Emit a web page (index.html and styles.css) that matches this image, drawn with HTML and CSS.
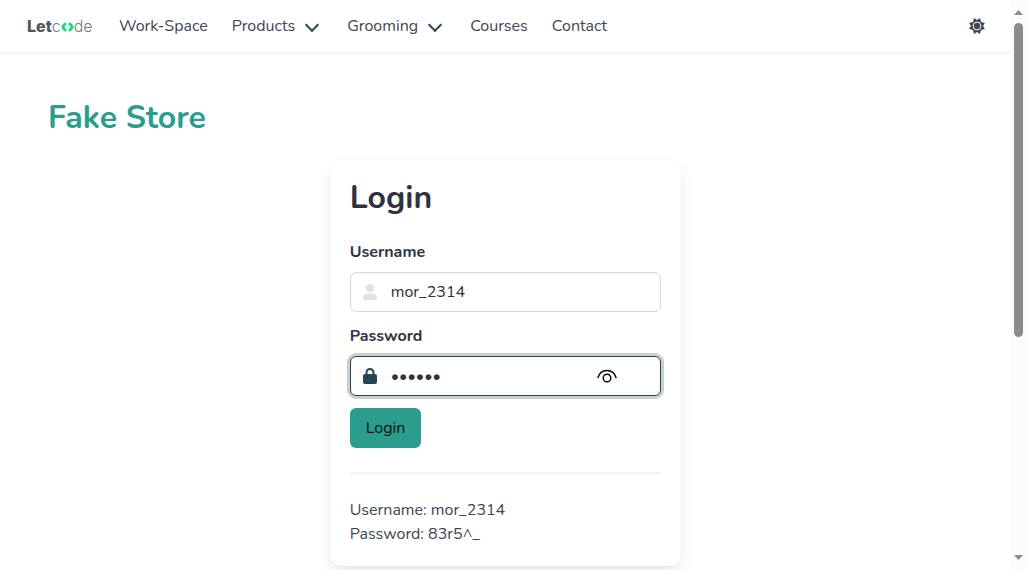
FILE: index.html
```
<!DOCTYPE html>
<html lang="en">
<head>
<meta charset="utf-8">
<meta name="viewport" content="width=device-width, initial-scale=1">
<title>Fake Store - LetCode</title>
<link rel="stylesheet" href="styles.css">
</head>
<body>
<div class="page">
  <header class="navbar">
    <a class="logo" href="#" aria-label="Letcode home"><b>Let</b><span>c</span><svg class="logo-mark" viewBox="0 0 13 10" aria-hidden="true"><path d="M5.300 1.500A4 3.600 0 0 0 2.300 5 4 3.600 0 0 0 5.300 8.500M7.700 1.500A4 3.600 0 0 1 10.700 5 4 3.600 0 0 1 7.700 8.500" fill="none" stroke="#0bdc82" stroke-width="2.600"/><path d="M0 5l2.500-2.500v5zM13 5l-2.500-2.500v5z" fill="#0bdc82"/></svg><span>de</span></a>
    <nav class="menu" aria-label="Main">
      <a href="#">Work-Space</a>
      <a class="has-arrow" href="#">Products</a>
      <a class="has-arrow" href="#">Grooming</a>
      <a href="#">Courses</a>
      <a href="#">Contact</a>
    </nav>
    <button class="theme" type="button" aria-label="Toggle theme">
      <svg viewBox="0 0 16 16" aria-hidden="true"><path fill="#404654" d="M8 2L11 .1l1 3.900 3.900 1L14 8l1.900 3-3.900 1-1 3.900L8 14l-3 1.900L4 12l-3.900-1L2 8 .1 5 4 4 5 .1z"/><circle cx="8" cy="8" r="3.900" fill="#404654" stroke="#fff" stroke-width="1"/></svg>
    </button>
  </header>
  <main class="section">
    <h1 class="title brand">Fake Store</h1>
    <div class="columns">
      <div class="column">
        <section class="box">
          <h2 class="title">Login</h2>
          <form class="form">
            <div class="field">
              <label for="username">Username</label>
              <div class="control">
                <input id="username" type="text" value="mor_2314">
                <svg class="icon" viewBox="0 0 14 16" aria-hidden="true"><circle cx="7" cy="4" r="4"/><path d="M0 16v-1.500a5 5 0 0 1 5-5h4a5 5 0 0 1 5 5V16z"/></svg>
              </div>
            </div>
            <div class="field">
              <label for="password">Password</label>
              <div class="control active">
                <input id="password" type="password" value="83r5^_">
                <svg class="icon" viewBox="0 0 14 16" aria-hidden="true"><path fill-rule="evenodd" d="M2.500 6V4.500a4.500 4.500 0 0 1 9 0V6H12a2 2 0 0 1 2 2v6a2 2 0 0 1-2 2H2a2 2 0 0 1-2-2V8a2 2 0 0 1 2-2zM4.500 6h5V4.500a2.500 2.500 0 0 0-5 0z"/></svg>
                <button class="reveal" type="button" aria-label="Show password"><svg viewBox="0 0 20 14" aria-hidden="true"><path d="M.8 9C2.200 4 5.600 1.500 10 1.500S17.800 4 19.200 9"/><circle cx="10" cy="9" r="3.800"/></svg></button>
              </div>
            </div>
            <button class="submit" type="button">Login</button>
          </form>
          <hr>
          <p>Username: mor_2314<br>Password: 83r5^_</p>
        </section>
      </div>
    </div>
  </main>
</div>
<div class="scrollbar" aria-hidden="true">
  <svg viewBox="0 0 9 5"><path d="M0 5L4.500 0 9 5z"/></svg>
  <div class="track"><div class="thumb"></div></div>
  <svg viewBox="0 0 9 5"><path d="M0 0L4.500 5 9 0z"/></svg>
</div>
</body>
</html>
```
FILE: styles.css
```
* { box-sizing: border-box; }
html { height: 100%; }
body {
  margin: 0;
  height: 100%;
  display: flex;
  overflow: hidden;
  background: #fff;
  color: #404654;
  font: 400 16px/24px Nunito, Lato, "Open Sans", sans-serif;
}
.page { flex: 1; min-width: 0; overflow: hidden; }
.navbar {
  display: flex;
  align-items: center;
  min-height: 52px;
  padding: 0 25px 0 27px;
  box-shadow: 0 2px 0 #f3f4f6;
}
.logo {
  display: flex;
  align-items: center;
  width: 68px;
  margin-right: 24px;
  color: #777;
  font: 300 16px/24px Inter, sans-serif;
  text-decoration: none;
}
.logo b { color: #555; font-weight: 800; }
.logo-mark { flex: none; width: 13px; height: 10px; margin-top: 2px; }
.menu { display: flex; flex: 1; gap: 24px; }
.menu a { color: #404654; text-decoration: none; }
.has-arrow { display: flex; align-items: center; gap: 12px; padding-right: 6px; }
.has-arrow::after {
  content: "";
  box-sizing: border-box;
  width: 10px;
  height: 10px;
  border: solid #264653;
  border-width: 0 2px 2px 0;
  transform: translateY(-1px) rotate(45deg);
}
.theme { display: flex; border: 0; padding: 1px; background: none; }
.theme svg { width: 16px; height: 16px; }
.section { padding: 48px; }
.title { margin: 0 0 24px; color: #2e333d; font-size: 32px; line-height: 36px; font-weight: 700; }
.brand { color: #2a9d8f; }
.columns { display: flex; justify-content: center; margin: 0 -12px; }
.column { width: 40%; padding: 0 12px; }
.box {
  padding: 20px;
  border-radius: 12px;
  background: #fff;
  box-shadow: 0 8px 16px -2px rgba(10, 10, 10, .1), 0 0 0 1px rgba(10, 10, 10, .02);
}
.form { display: flex; flex-direction: column; align-items: flex-start; gap: 12px; }
.field { display: flex; flex-direction: column; gap: 8px; width: 100%; }
.field label { color: #2e333d; font-weight: 700; }
.control { position: relative; }
.control input {
  display: block;
  width: 100%;
  height: 40px;
  padding: 0 40px;
  border: 1px solid #d6d9e0;
  border-radius: 6px;
  outline: 0;
  background: #fff;
  box-shadow: inset 0 1px 2px rgba(10, 10, 10, .05);
  color: #2e333d;
  font: inherit;
}
.icon { position: absolute; left: 13px; top: 12px; width: 14px; height: 16px; fill: #dfe2e8; }
.active .icon { fill: #264653; }
.active input { border-color: #264653; box-shadow: 0 0 0 3px rgba(38, 70, 83, .25); }
.reveal {
  position: absolute;
  right: 44px;
  top: 13px;
  display: flex;
  border: 0;
  padding: 0;
  background: none;
}
.reveal svg { width: 20px; height: 14px; fill: none; stroke: #000; stroke-width: 1.4; }
.submit {
  height: 40px;
  padding: 0 16px;
  border: 0;
  border-radius: 6px;
  background: #2a9d8f;
  color: #051412;
  font: inherit;
}
hr { height: 2px; margin: 24px 0; border: 0; background: #f3f4f6; }
p { margin: 0; }
.scrollbar {
  display: flex;
  flex-direction: column;
  align-items: center;
  gap: 8px;
  width: 15px;
  padding: 10px 3px 10px;
  background: #fcfcfc;
}
.scrollbar svg { width: 9px; height: 5px; fill: #8b8b8b; }
.track { flex: 1; width: 9px; }
.thumb { height: 60%; border-radius: 5px; background: #8b8b8b; }
```
